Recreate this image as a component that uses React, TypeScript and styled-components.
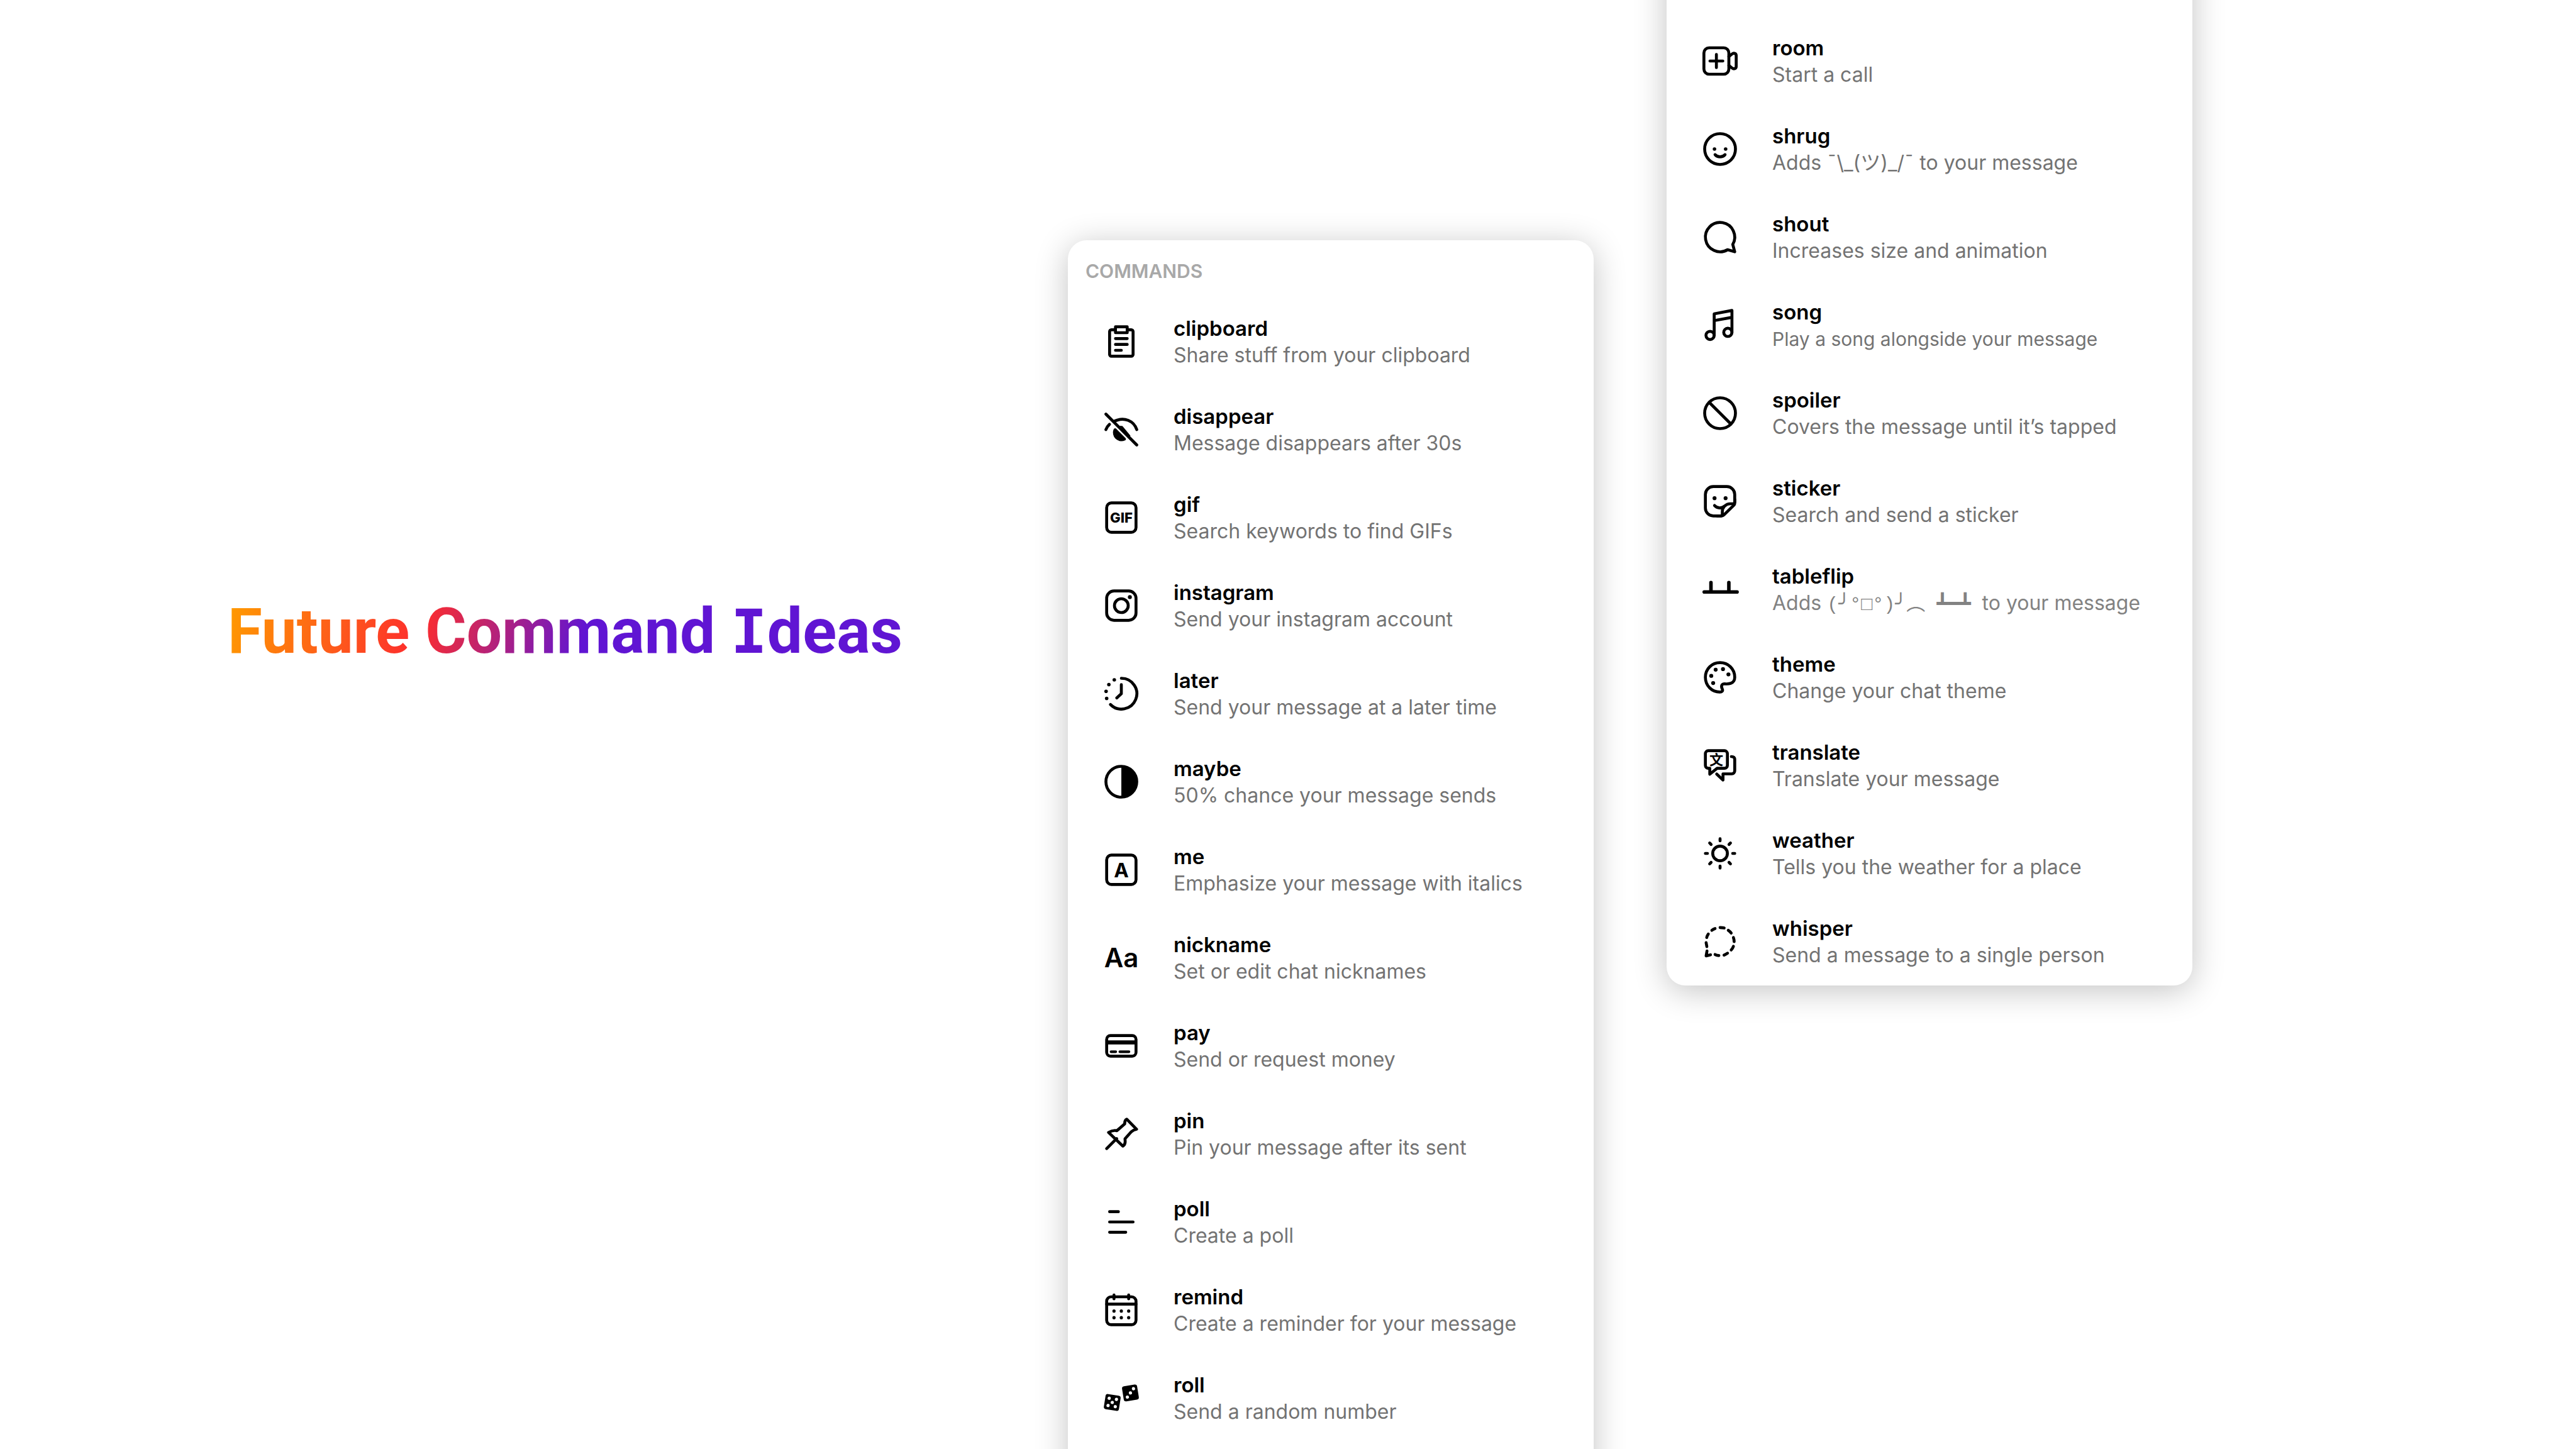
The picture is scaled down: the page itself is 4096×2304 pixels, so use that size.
import React, { ReactNode } from 'react';
import styled, { createGlobalStyle } from 'styled-components';

const GlobalStyle = createGlobalStyle`
  *, *::before, *::after { box-sizing: border-box; }
  body {
    margin: 0;
    background: #fff;
    font-family: Inter, "Noto Sans", "Liberation Sans", "Noto Sans CJK JP", sans-serif;
  }
`;

const Page = styled.main`
  display: grid;
  grid-template-columns: 1fr 836px 836px;
  column-gap: 116px;
  align-items: start;
  height: 100vh;
  padding-right: 610px;
  overflow: hidden;
  background: #fff;
`;

const Hero = styled.header`
  padding: 944px 0 0 362px;
`;

const Title = styled.h1`
  width: max-content;
  margin: 0;
  font-family: Roboto, "Liberation Sans", sans-serif;
  font-size: 100px;
  line-height: 120px;
  font-weight: 700;
  white-space: nowrap;
  color: transparent;
  background: linear-gradient(105deg, #ff9d00 0%, #fd2d2d 29%, #6015d3 53%);
  background-clip: text;
  -webkit-background-clip: text;
`;

const SlabLetter = styled.span`
  font-family: "DejaVu Sans Mono", monospace;
  font-size: 96px;
`;

const Panel = styled.section<{ $bleed?: 'top' | 'bottom' }>`
  margin-top: ${p => (p.$bleed === 'top' ? '-80px' : '382px')};
  padding-top: ${p => (p.$bleed === 'top' ? '107px' : '0')};
  padding-bottom: ${p => (p.$bleed === 'bottom' ? '140px' : '0')};
  border-radius: 30px;
  background: #fff;
  box-shadow: 0 8px 52px rgba(0, 0, 0, 0.24);
`;

const PanelTitle = styled.h2`
  margin: 0;
  padding: 29px 28px 22px;
  color: #a8a8a8;
  font-size: 30px;
  line-height: 40px;
  font-weight: 600;
`;

const List = styled.ul`
  margin: 0;
  padding: 0;
  list-style: none;
`;

const Row = styled.button`
  display: flex;
  align-items: center;
  gap: 55px;
  width: 100%;
  height: 140px;
  padding: 0 28px 0 57px;
  border: 0;
  background: none;
  color: #000;
  font: inherit;
  text-align: left;
  cursor: pointer;
`;

const Icon = styled.svg`
  flex: none;
  width: 56px;
  height: 56px;
  overflow: visible;
  fill: none;
  stroke: #000;
  stroke-width: 2;
  stroke-linecap: round;
  stroke-linejoin: round;

  .fill { fill: #000; stroke: none; }
  .hole { fill: #fff; stroke: none; }
  text { fill: #000; stroke: none; text-anchor: middle; font-weight: 700; }
`;

const Copy = styled.span`
  display: flex;
  flex-direction: column;
  gap: 1px;
  line-height: 42px;
  white-space: nowrap;
`;

const Name = styled.span`
  height: 42px;
  font-size: 33px;
  font-weight: 600;
`;

const Description = styled.span<{ $small?: boolean; $pale?: boolean }>`
  height: 42px;
  color: ${p => (p.$pale ? '#828282' : '#737373')};
  font-size: ${p => (p.$small ? '30px' : '32px')};
`;

const Kaomoji = styled.span`
  font-family: "Liberation Mono", "DejaVu Sans Mono", "Noto Sans CJK JP", monospace;
  font-size: 30px;
  line-height: 1;
  white-space: pre;
`;

const BoxDrawing = styled.span`
  font-family: "DejaVu Sans Mono", monospace;
`;

type Command = { name: string; text: ReactNode; icon: ReactNode; small?: boolean; pale?: boolean };

const box = <rect x="2" y="2" width="20" height="20" rx="3.2" />;

const commands: Command[] = [
  {
    name: 'clipboard', text: 'Share stuff from your clipboard',
    icon: <><path d="M8 4H5.2A1.2 1.2 0 0 0 4 5.2v15.6A1.2 1.2 0 0 0 5.2 22h13.6a1.2 1.2 0 0 0 1.2-1.2V5.2A1.2 1.2 0 0 0 18.800 4H16" /><path d="M8 2h8v4H8zM8 10h8M8 14h8M8 18h4" /></>,
  },
  {
    name: 'disappear', text: 'Message disappears after 30s',
    icon: <><path d="M1.500 1.500l21 21M7.500 6.200C14 3.200 20.500 6 22.500 12M1.500 12c.5-1.300 1.300-2.500 2.400-3.500" /><path className="fill" d="M7.300 11.300a1 1 0 0 1 1.200.2l6.300 6.300c.5.5.4 1.300-.3 1.600a5.800 5.800 0 0 1-8.200-5.300c0-.9.2-1.700.5-2.300a1 1 0 0 1 .5-.5ZM10.800 9.400a5.800 5.800 0 0 1 2 .2l5.400 6.600a5.800 5.800 0 0 1-.6 1.300z" /></>,
  },
  {
    name: 'gif', text: 'Search keywords to find GIFs',
    icon: <>{box}<text x="12" y="15.500" fontSize="9.500" style={{ fontWeight: 800 }}>GIF</text></>,
  },
  {
    name: 'instagram', text: 'Send your instagram account',
    icon: <><rect x="2" y="2" width="20" height="20" rx="5" /><circle cx="12" cy="12" r="4.700" /><circle className="fill" cx="17.800" cy="6.200" r="1.350" /></>,
  },
  {
    name: 'later', text: 'Send your message at a later time',
    icon: <><path d="M12 1.500a10.500 10.500 0 1 1-7.400 17.900M12 5.800V12l-3.100 2.900" /><g className="fill"><circle cx="7.200" cy="2.600" r="1.200" /><circle cx="3.500" cy="5.800" r="1.200" /><circle cx="1.600" cy="10.400" r="1.200" /><circle cx="2" cy="15.200" r="1.200" /></g></>,
  },
  {
    name: 'maybe', text: '50% chance your message sends',
    icon: <><circle cx="12" cy="12" r="10.500" /><path className="fill" d="M12 1v22a11 11 0 0 0 0-22z" /></>,
  },
  {
    name: 'me', text: 'Emphasize your message with italics',
    icon: <>{box}<text x="12" y="17" fontSize="13.500">A</text></>,
  },
  {
    name: 'nickname', text: 'Set or edit chat nicknames',
    icon: <text x="12" y="18.500" fontSize="18" style={{ fontWeight: 600 }}>Aa</text>,
  },
  {
    name: 'pay', text: 'Send or request money',
    icon: <><rect x="2" y="5" width="20" height="14" rx="2.600" /><path className="fill" d="M2 8.300h20v2.700H2z" /><path d="M5 16h3.200M11 16h6.200" strokeWidth="1.800" /></>,
  },
  {
    name: 'pin', text: 'Pin your message after its sent',
    icon: <path d="M8.800 15.200L2 22M3.300 11l9.700 9.300c1.100-.6 1.700-1.800 1.600-3.300l-.1-1.700 4.200-4.700c1-.9 2.200-1.500 3.700-1.800L15.700 2c-1.100.5-1.500 1.400-1.400 3.100L9 9.800c-1.800-.4-3.800 0-5.700 1.200z" />,
  },
  {
    name: 'poll', text: 'Create a poll',
    icon: <path d="M4 5h6M4 12h16M4 19h11" />,
  },
  {
    name: 'remind', text: 'Create a reminder for your message',
    icon: <><rect x="2" y="3" width="20" height="19" rx="3" /><path d="M2 8h20M7 1.800v2.600M17 1.800v2.600" /><g className="fill">{[7, 12, 17].map(x => [12.700, 17.200].map(y => <circle key={`${x}-${y}`} cx={x} cy={y} r="1.100" />))}</g></>,
  },
  {
    name: 'roll', text: 'Send a random number',
    icon: <><g transform="rotate(9 5.800 15)"><rect className="fill" x=".6" y="9.800" width="10.400" height="10.400" rx="1.600" />{[[3.300, 12.500], [8.300, 12.500], [5.800, 15], [3.300, 17.500], [8.300, 17.500]].map(([x, y]) => <circle className="hole" key={`${x}-${y}`} cx={x} cy={y} r="1.100" />)}</g><g transform="rotate(-9 18.200 8.500)"><rect className="fill" x="13" y="3.300" width="10.400" height="10.400" rx="1.600" />{[[20.700, 6], [18.200, 8.500], [15.700, 11]].map(([x, y]) => <circle className="hole" key={`${x}-${y}`} cx={x} cy={y} r="1.100" />)}</g></>,
  },
];

const moreCommands: Command[] = [
  {
    name: 'room', text: 'Start a call',
    icon: <><rect x="1" y="3" width="17" height="18" rx="3.500" /><path d="M5.100 12h8.800M9.500 7.500v9M18 9l2.200-1.800c1.200-.9 2.800-.4 2.800 1.100v7.400c0 1.500-1.600 2-2.800 1.100L18 15" /></>,
  },
  {
    name: 'shrug', text: 'Adds ¯\\_(ツ)_/¯ to your message',
    icon: <><circle cx="12" cy="12" r="10.500" /><path d="M8.600 15.800c1.700 2 5.100 2 6.800 0" /><circle className="fill" cx="8.200" cy="12" r="1.200" /><circle className="fill" cx="15.800" cy="12" r="1.200" /></>,
  },
  {
    name: 'shout', text: 'Increases size and animation',
    icon: <path d="M20.656 17.008a9.993 9.993 0 1 0-3.590 3.615L22 22Z" />,
  },
  {
    name: 'song', text: 'Play a song alongside your message', small: true,
    icon: <><circle cx="5.200" cy="19" r="2.800" /><circle cx="17.300" cy="16.900" r="2.800" /><path d="M8 19V4.300L20.100 2v14.900M8 8.900l12.100-2.200" /></>,
  },
  {
    name: 'spoiler', text: 'Covers the message until it’s tapped',
    icon: <><circle cx="12" cy="12" r="10.500" /><path d="M4.600 4.600l14.800 14.800" /></>,
  },
  {
    name: 'sticker', text: 'Search and send a sticker',
    icon: <><path d="M13.110 22H7.416A5.417 5.417 0 0 1 2 16.583V7.417A5.417 5.417 0 0 1 7.417 2h9.166A5.417 5.417 0 0 1 22 7.417v5.836a2.083 2.083 0 0 1-.626 1.488l-6.808 6.664A2.083 2.083 0 0 1 13.110 22Z" /><path d="M15.174 15.230a4.887 4.887 0 0 1-6.937-.301M22 10.833v1.629a1.250 1.250 0 0 1-1.250 1.250h-1.790a5.417 5.417 0 0 0-5.417 5.417v1.620a1.250 1.250 0 0 1-1.250 1.250H9.897" /><circle className="fill" cx="8.238" cy="9.943" r="1.335" /><circle className="fill" cx="15.762" cy="9.943" r="1.335" /></>,
  },
  {
    name: 'tableflip', pale: true,
    text: <>Adds <Kaomoji>(<BoxDrawing>╯</BoxDrawing>°□°)<BoxDrawing>╯</BoxDrawing>︵ <BoxDrawing>┻━┻</BoxDrawing> </Kaomoji>to your message</>,
    icon: <path d="M1.200 13.800h22.400M5.800 7.400v6M18 7.400v6" strokeWidth="2.400" />,
  },
  {
    name: 'theme', text: 'Change your chat theme',
    icon: <><path d="M12 2C6.500 2 2 6.200 2 12s4.500 10 9.800 10c1.600 0 2.300-.9 1.700-2.100-.9-1.800-.6-3.500 1.700-3.500 1.800.2 6.800.4 6.800-4.400C22 6.200 17.500 2 12 2z" /><g className="fill"><circle cx="9" cy="6.800" r="1.350" /><circle cx="14" cy="6.400" r="1.350" /><circle cx="17.700" cy="10" r="1.350" /><circle cx="6" cy="11" r="1.350" /><circle cx="7.300" cy="15.900" r="1.350" /></g></>,
  },
  {
    name: 'translate', text: 'Translate your message',
    icon: <><path d="M4 2h11a2 2 0 0 1 2 2v8a2 2 0 0 1-2 2h-5l-5 4v-4H4a2 2 0 0 1-2-2V4a2 2 0 0 1 2-2zM19.700 6c1.500 0 2.300.7 2.300 2v7.800a2 2 0 0 1-2 2h-6V22l-4.300-4.100" /><text x="9.500" y="11.600" fontSize="9.500" fontFamily="Noto Sans CJK SC">文</text></>,
  },
  {
    name: 'weather', text: 'Tells you the weather for a place',
    icon: <><circle cx="12" cy="12" r="5" /><path d="M2 12h1.400M20.600 12H22M12 2v1.400M12 20.600V22M4.900 4.900l1 1M18.100 18.100l1 1M4.900 19.100l1-1M18.100 5.900l1-1" /></>,
  },
  {
    name: 'whisper', text: 'Send a message to a single person',
    icon: <path d="M2.500 12.800l.5 2.700M2.900 9.300q.3-1.300 1.100-2.400M6.400 4.400q1-.8 2.200-1.200M12 2.500q1.500 0 2.800.3M17.600 4.400q1.200.8 2 1.900M21.100 9.300q.5 1.400.5 2.800M21.100 15.300q-.5 1.400-1.500 2.500M17.100 20q-1.100.8-2.400 1.300M11.200 21.600q-1.300-.1-2.600-.7M3.100 18.500l-.6 3.300 3-.7" />,
  },
];

const CommandList = ({ items }: { items: Command[] }) => (
  <List>
    {items.map(c => (
      <li key={c.name}>
        <Row type="button">
          <Icon viewBox="0 0 24 24" aria-hidden="true">{c.icon}</Icon>
          <Copy>
            <Name>{c.name}</Name>
            <Description $small={c.small} $pale={c.pale}>{c.text}</Description>
          </Copy>
        </Row>
      </li>
    ))}
  </List>
);

export default function App() {
  return (
    <>
      <GlobalStyle />
      <Page>
        <Hero>
          <Title>Future Command <SlabLetter>I</SlabLetter>deas</Title>
        </Hero>
        <Panel $bleed="bottom">
          <PanelTitle>COMMANDS</PanelTitle>
          <CommandList items={commands} />
        </Panel>
        <Panel $bleed="top">
          <CommandList items={moreCommands} />
        </Panel>
      </Page>
    </>
  );
}
